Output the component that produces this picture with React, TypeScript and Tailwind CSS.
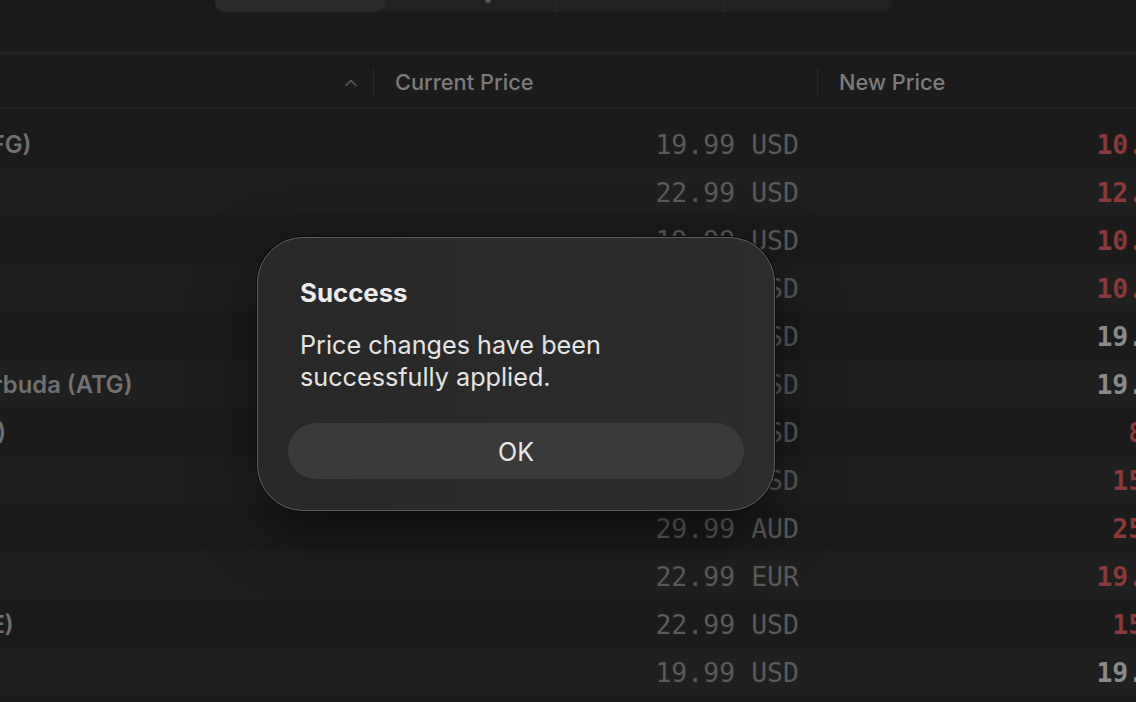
import React from "react";

type Row = { name: string; cur: string; next: string; red: boolean };

const rows: Row[] = [
  { name: "Afghanistan (AFG)", cur: "19.99 USD", next: "10.99 USD", red: true },
  { name: "Albania (ALB)", cur: "22.99 USD", next: "12.99 USD", red: true },
  { name: "Algeria (DZA)", cur: "19.99 USD", next: "10.99 USD", red: true },
  { name: "Angola (AGO)", cur: "19.99 USD", next: "10.99 USD", red: true },
  { name: "Anguilla (AIA)", cur: "19.99 USD", next: "19.99 USD", red: false },
  { name: "Antigua and Barbuda (ATG)", cur: "19.99 USD", next: "19.99 USD", red: false },
  { name: "Argentina (ARG)", cur: "9.99 USD", next: "8.5 USD", red: true },
  { name: "Armenia (ARM)", cur: "19.99 USD", next: "15.5 USD", red: true },
  { name: "Australia (AUS)", cur: "29.99 AUD", next: "25.5 AUD", red: true },
  { name: "Austria (AUT)", cur: "22.99 EUR", next: "19.99 EUR", red: true },
  { name: "Azerbaijan (AZE)", cur: "22.99 USD", next: "15.5 USD", red: true },
  { name: "Bahamas (BHS)", cur: "19.99 USD", next: "19.99 USD", red: false },
];

const sans = "font-['Inter','Noto_Sans',sans-serif]";
const mono = "font-['DejaVu_Sans_Mono','Liberation_Mono',monospace]";

export default function App() {
  return (
    <div className={`relative w-[1136px] h-[702px] overflow-hidden bg-[#1b1b1b] ${sans}`}>
      {/* top segmented control (scrolled partly off) */}
      <div className="h-[52px] pl-[215px]">
        <div className="flex w-[678px] h-[12px] bg-[#212121] rounded-b-[10px]">
          <div className="w-[170px] h-full bg-[#2a2a2a] rounded-b-[10px]" />
          <div className="w-[171px] h-full border-r border-[#2a2a2a] relative">
            <div className="absolute left-[100px] top-0 w-[6px] h-[3px] rounded-b-full bg-[#555]" />
          </div>
          <div className="w-[168px] h-full border-r border-[#2a2a2a]" />
          <div className="flex-1" />
        </div>
      </div>
      {/* header */}
      <div className="h-[57px] border-t-2 border-b-2 border-[#232323] flex items-center pt-[3px]">
        <div className="w-[373px] shrink-0 h-full flex items-center justify-end pr-[15px]">
          <svg width="14" height="9" viewBox="0 0 14 9">
            <path d="M2 7.5 L7 2.5 L12 7.5" fill="none" stroke="#5a5a5a" strokeWidth="1.6" strokeLinecap="round" strokeLinejoin="round" />
          </svg>
        </div>
        <div className="w-[444px] shrink-0 flex items-center border-l border-[#2a2a2a] h-[29px] pl-[21px] text-[21.8px] font-medium text-[#7b7b7b]">
          Current Price
        </div>
        <div className="flex-1 flex items-center border-l border-[#2a2a2a] h-[29px] pl-[21px] text-[21.8px] font-medium text-[#7b7b7b]">
          New Price
        </div>
      </div>
      {/* rows */}
      <div className="pt-[10px]">
        {rows.map((r, i) => (
          <div
            key={i}
            className={`flex items-center h-[48px] pt-[3px] ${i % 2 === 1 ? "bg-[#1f1f1f]" : "bg-[#1b1b1b]"}`}
          >
            <div className="w-[373px] shrink-0 overflow-visible">
              <span className="block -ml-[181px] whitespace-nowrap text-[23.8px] font-semibold text-[#717171]">
                {r.name}
              </span>
            </div>
            <div className={`w-[444px] shrink-0 text-right pr-[18px] text-[26.5px] text-[#5a5a5a] ${mono}`}>
              {r.cur}
            </div>
            <div
              className={`w-[430px] shrink-0 text-right pr-[7px] text-[26.5px] font-bold ${mono} ${
                r.red ? "text-[#8a3838]" : "text-[#8a8a8a]"
              }`}
            >
              {r.next}
            </div>
          </div>
        ))}
      </div>

      {/* dialog */}
      <div className="absolute left-[257px] top-[237px] w-[518px] h-[274px] rounded-[46px] border border-[#5c5c5c] bg-gradient-to-r from-[#282828] to-[#2c2c2c] shadow-[0_0_0_1px_#0c0c0c,0_18px_60px_rgba(0,0,0,0.55)] flex flex-col">
        <div className="pl-[42px] pt-[39px] text-[25.8px] leading-[32px] font-bold text-[#ececec]">Success</div>
        <div className="pl-[42px] mt-[20px] text-[25.2px] leading-[32px] text-[#e4e4e4]">
          Price changes have been
          <br />
          successfully applied.
        </div>
        <div className="mt-[30px] mx-[30px] h-[56px] rounded-full bg-[#3a3a3a] flex items-center justify-center pt-[3px] text-[25px] text-[#e8e8e8]">
          OK
        </div>
      </div>
    </div>
  );
}
